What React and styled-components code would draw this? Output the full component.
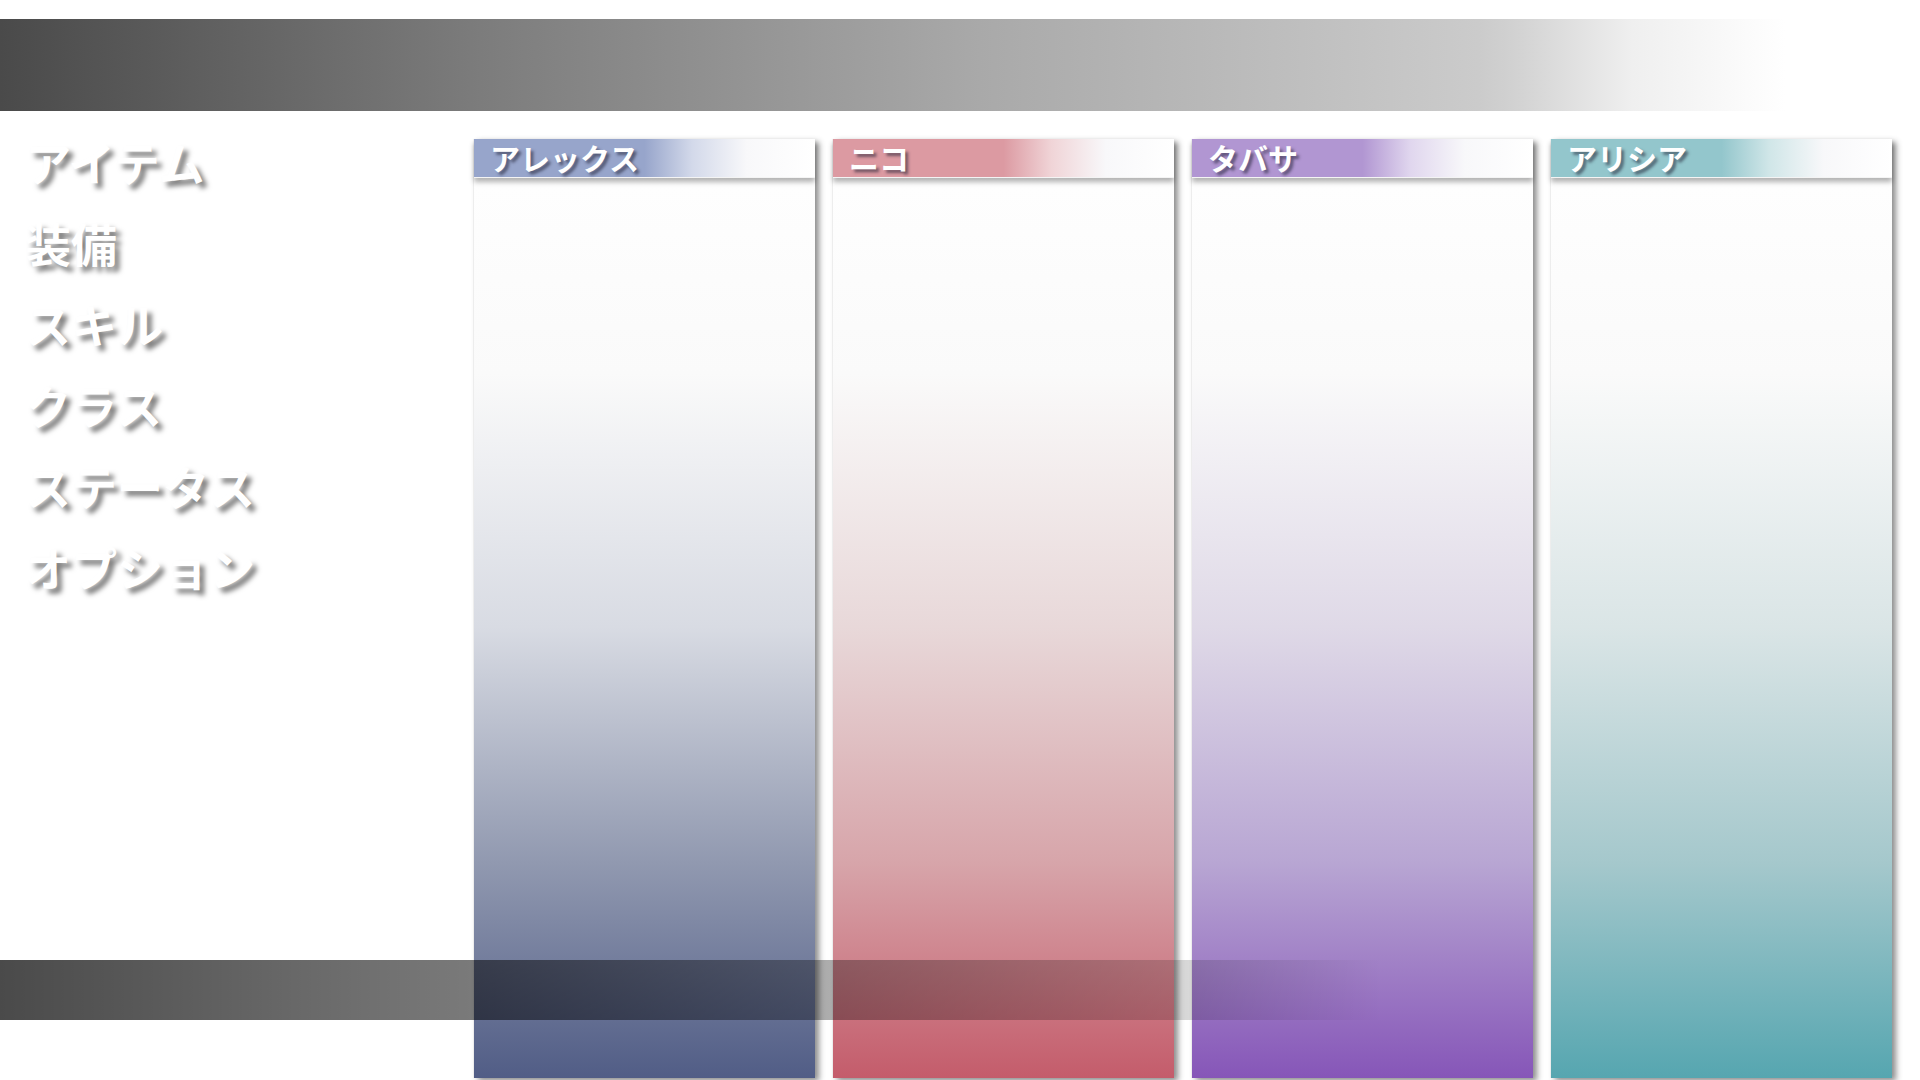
import React from "react";
import styled, { createGlobalStyle } from "styled-components";

const Global = createGlobalStyle`
  html, body { margin: 0; padding: 0; background: #ffffff; }
  body { font-family: "Noto Sans CJK JP", "Noto Sans", sans-serif; }
`;

const Page = styled.div`
  position: relative;
  width: 1920px;
  height: 1080px;
  overflow: hidden;
  background: #ffffff;
  display: flex;
  flex-direction: column;
`;

const TopBar = styled.div`
  margin-top: 19px;
  height: 92px;
  flex: none;
  background: linear-gradient(
    to right,
    #4a4a4a 0%,
    #7c7c7c 25%,
    #a9a9a9 51%,
    #cbcbcb 77%,
    #d2d2d2 79%,
    #efefef 85%,
    #ffffff 93%
  );
`;

const Main = styled.div`
  flex: 1;
  display: flex;
  min-height: 0;
`;

const Sidebar = styled.nav`
  width: 474px;
  flex: none;
  padding: 10px 0 0 25px;
  box-sizing: border-box;
  display: flex;
  flex-direction: column;
`;

const MenuItem = styled.div`
  font-family: "Noto Sans CJK JP", sans-serif;
  font-weight: 700;
  font-size: 46px;
  line-height: 81px;
  height: 81px;
  color: #ffffff;
  text-shadow: 5px 5px 5px rgba(0, 0, 0, 0.5);
  white-space: nowrap;
`;

const Columns = styled.div`
  flex: 1;
  display: grid;
  grid-template-columns: repeat(4, 341px);
  column-gap: 18px;
  padding-top: 28px;
  padding-bottom: 2px;
  box-sizing: border-box;
`;

const Column = styled.section`
  display: flex;
  flex-direction: column;
  box-shadow: 4px 3px 6px rgba(0, 0, 0, 0.45), -1px 0 0 rgba(0, 0, 0, 0.04);
  background: linear-gradient(
    to bottom,
    #ffffff 0%,
    #fafafa 25%,
    ${(p) => p.$c.light} 52%,
    ${(p) => p.$c.mid} 77%,
    ${(p) => p.$c.dark} 100%
  );
`;

const Header = styled.div`
  position: relative;
  z-index: 1;
  height: 39px;
  flex: none;
  box-sizing: border-box;
  padding-left: 16px;
  border-bottom: 1px solid #f4f4f4;
  box-shadow: 0 4px 5px rgba(0, 0, 0, 0.3);
  background: linear-gradient(
    to right,
    ${(p) => p.$c.head} 0%,
    ${(p) => p.$c.head} 50%,
    ${(p) => p.$c.fade} 64%,
    #f8f8fa 80%,
    #ffffff 100%
  );
  font-family: "Noto Sans CJK JP", sans-serif;
  font-weight: 700;
  font-size: 30px;
  line-height: 37px;
  color: #ffffff;
  text-shadow: 3px 3px 3px rgba(30, 30, 50, 0.55);
  white-space: nowrap;
`;

const Body = styled.div`
  flex: 1;
`;

const BottomBar = styled.div`
  position: absolute;
  left: 0;
  top: 960px;
  width: 1920px;
  height: 60px;
  pointer-events: none;
  background: linear-gradient(
    to right,
    rgba(0, 0, 0, 0.71) 0%,
    rgba(0, 0, 0, 0.52) 24.7%,
    rgba(0, 0, 0, 0.33) 42.5%,
    rgba(0, 0, 0, 0.16) 61.5%,
    rgba(0, 0, 0, 0) 72%
  );
`;

const menu = ["アイテム", "装備", "スキル", "クラス", "ステータス", "オプション"];

const chars = [
  {
    name: "アレックス",
    c: { head: "#97a5cb", fade: "#d3d9ea", light: "#d8dbe3", mid: "#9199b0", dark: "#515d86" },
  },
  {
    name: "ニコ",
    c: { head: "#dc9aa2", fade: "#f0d4d7", light: "#e8d8d9", mid: "#d7a5aa", dark: "#c45c6b" },
  },
  {
    name: "タバサ",
    c: { head: "#b196d2", fade: "#e0d6ee", light: "#dfd9e7", mid: "#b8a6d3", dark: "#8656b8" },
  },
  {
    name: "アリシア",
    c: { head: "#93c6cc", fade: "#d0e6e8", light: "#dae5e6", mid: "#a5c8cc", dark: "#56a6b0" },
  },
];

export default function App() {
  return (
    <Page>
      <Global />
      <TopBar />
      <Main>
        <Sidebar>
          {menu.map((m) => (
            <MenuItem key={m}>{m}</MenuItem>
          ))}
        </Sidebar>
        <Columns>
          {chars.map((ch) => (
            <Column key={ch.name} $c={ch.c}>
              <Header $c={ch.c}>{ch.name}</Header>
              <Body />
            </Column>
          ))}
        </Columns>
      </Main>
      <BottomBar />
    </Page>
  );
}
